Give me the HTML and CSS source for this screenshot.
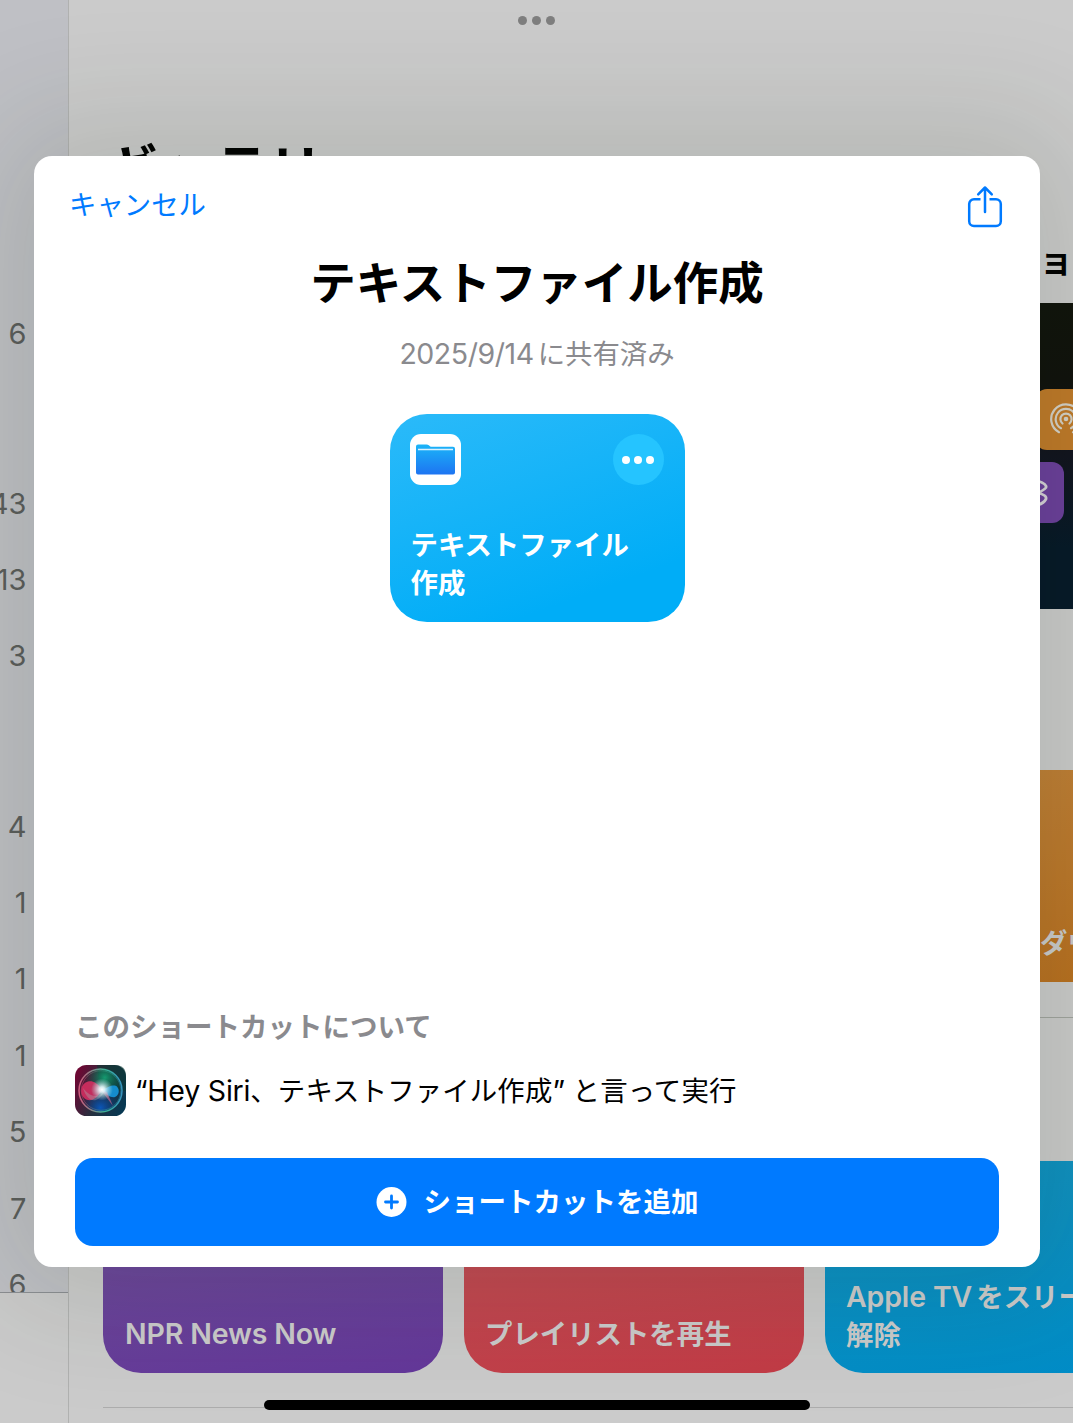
FILE: index.html
```
<!DOCTYPE html>
<html lang="ja">
<head>
    <meta charset="UTF-8">
    <title>テキストファイル作成</title>
    <link rel="stylesheet" href="styles.css">
</head>
<body>
<div class="app">
    <aside class="sidebar">
        <ul class="sidebar-list">
            <li>6</li>
            <li class="group-start">43</li>
            <li>13</li>
            <li>3</li>
            <li class="group-start">4</li>
            <li>1</li>
            <li>1</li>
            <li>1</li>
            <li>5</li>
            <li>7</li>
            <li>6</li>
        </ul>
    </aside>

    <main class="gallery">
        <h1 class="gallery-title">ギャラリー</h1>
        <h2 class="section-title">ョ</h2>
        <div class="banner">
            <div class="tile tile--orange">
                <svg width="34" height="34" viewBox="0 0 34 34" fill="none" stroke="#d6d2c8" stroke-width="2.2" stroke-linecap="round">
                    <circle cx="17" cy="16" r="2.3" fill="#d6d2c8" stroke="none"/>
                    <path d="M13.500 20.500a5.600 5.600 0 1 1 7 0"/>
                    <path d="M12 25.200a10.300 10.300 0 1 1 10 0"/>
                    <path d="M10 29.200a14.800 14.800 0 1 1 14 0"/>
                </svg>
            </div>
            <div class="tile tile--purple">
                <svg width="34" height="34" viewBox="0 0 34 34" fill="none" stroke="#d6d2d8" stroke-width="2.800" stroke-linecap="round" stroke-linejoin="round">
                    <path d="M8 8L21 5Q30 8 29 11.500Q27 14 21 17Q30 19 29 23Q27 27 21 29L8 26"/>
                </svg>
            </div>
        </div>
        <div class="card-row card-row--single">
            <div class="card card--orange">ダウ</div>
        </div>
        <div class="card-row">
            <div class="card card--purple"><span class="latin">NPR News Now</span></div>
            <div class="card card--red">プレイリストを再生</div>
            <div class="card card--blue">
                <div><span class="latin">Apple TV</span><span class="thin-space"> </span>をスリープ</div>
                <div>解除</div>
            </div>
        </div>
    </main>

    <div class="window-dots"><span></span><span></span><span></span></div>

    <section class="sheet">
        <header class="sheet-bar">
            <a class="cancel">キャンセル</a>
            <svg class="share" width="36" height="44" viewBox="0 0 36 44" fill="none" stroke="#007aff" stroke-width="2.5" stroke-linecap="round" stroke-linejoin="round">
                <path d="M13.500 14.2H7a4.8 4.8 0 0 0-4.8 4.8v17.300a4.800 4.800 0 0 0 4.800 4.800h22a4.800 4.800 0 0 0 4.800-4.800V19a4.800 4.800 0 0 0-4.800-4.800h-6.500" stroke-linecap="butt"/>
                <path d="M18 27V2.800M11.200 9.300L18 2.500L24.800 9.300"/>
            </svg>
        </header>

        <h1 class="sheet-title">テキストファイル作成</h1>
        <p class="sheet-date"><span class="latin">2025/9/14</span>に共有済み</p>

        <div class="shortcut">
            <div class="shortcut-top">
                <div class="shortcut-app">
                    <svg width="39" height="31" viewBox="0 0 39 31">
                        <defs>
                            <linearGradient id="folder" x1="0" y1="0" x2="0" y2="1">
                                <stop offset="0" stop-color="#1bb5f8"/>
                                <stop offset="1" stop-color="#1d74f2"/>
                            </linearGradient>
                        </defs>
                        <path d="M2 .5h8.500q1.500 0 2.300.8l1.200 1q.7.500 1.500.500H37q2 0 2 2V28.500q0 2-2 2H2q-2 0-2-2V2.500Q0 .5 2 .5Z" fill="url(#folder)"/>
                        <path d="M2 5.500h35" stroke="#d9f1ff" stroke-width="1.700"/>
                    </svg>
                </div>
                <div class="shortcut-more"><span></span><span></span><span></span></div>
            </div>
            <div class="shortcut-name">テキストファイル<br>作成</div>
        </div>

        <div class="about">
            <h2 class="about-title">このショートカットについて</h2>
            <div class="about-row">
                <svg class="siri" width="51" height="51" viewBox="0 0 51 51">
                    <defs>
                        <linearGradient id="siri-bg" x1="0" y1=".3" x2="1" y2=".7">
                            <stop offset="0" stop-color="#6d0833"/>
                            <stop offset=".5" stop-color="#26303f"/>
                            <stop offset="1" stop-color="#073852"/>
                        </linearGradient>
                        <radialGradient id="siri-green" cx=".6" cy=".2" r=".5">
                            <stop offset="0" stop-color="#159a70"/>
                            <stop offset="1" stop-color="#0a4d3c" stop-opacity="0"/>
                        </radialGradient>
                        <radialGradient id="siri-blue" cx=".5" cy=".9" r=".45">
                            <stop offset="0" stop-color="#0a56b8"/>
                            <stop offset="1" stop-color="#0a3a80" stop-opacity="0"/>
                        </radialGradient>
                        <linearGradient id="siri-ring" x1="0" y1="0" x2="1" y2="0">
                            <stop offset="0" stop-color="#d0587c"/>
                            <stop offset=".6" stop-color="#3bb393"/>
                            <stop offset="1" stop-color="#3594c0"/>
                        </linearGradient>
                        <radialGradient id="siri-glow">
                            <stop offset="0" stop-color="#fff"/>
                            <stop offset=".25" stop-color="#e9fbff" stop-opacity=".9"/>
                            <stop offset="1" stop-color="#a6dfe0" stop-opacity="0"/>
                        </radialGradient>
                    </defs>
                    <rect width="51" height="51" rx="11.500" fill="url(#siri-bg)"/>
                    <path d="M22 0H40Q51 0 51 11V26H25Z" fill="#07392f" opacity=".5"/>
                    <circle cx="25.500" cy="25.500" r="21.500" fill="url(#siri-green)"/>
                    <circle cx="25.500" cy="25.500" r="21.500" fill="url(#siri-blue)"/>
                    <circle cx="25.500" cy="25.500" r="21.500" fill="none" stroke="url(#siri-ring)" stroke-width="1.500"/>
                    <circle cx="26" cy="25.500" r="19.800" fill="none" stroke="url(#siri-ring)" stroke-width=".7" opacity=".6"/>
                    <path d="M27 25C22 17 17 15.500 13 16.500C6 18 4 28 9 33C15 38 22 34 27 25Z" fill="#dc2f63" opacity=".85"/>
                    <path d="M8 23C12 37 22 40 29 27C23 33 16 33 8 23Z" fill="#b0a0a8" opacity=".4"/>
                    <path d="M27 25C33 22 36 20 40 20.500C45 22 45 30 40 32C36 33 31 30 27 25Z" fill="#1596dc" opacity=".9"/>
                    <path d="M26 25L38 41L32 27Z" fill="#db6a92" opacity=".6"/>
                    <circle cx="27" cy="24.500" r="11" fill="url(#siri-glow)"/>
                </svg>
                <p class="about-text"><span class="latin">“Hey Siri</span>、テキストファイル作成<span class="latin">” </span>と言って実行</p>
            </div>
        </div>

        <button class="add">
            <svg width="31" height="31" viewBox="0 0 31 31">
                <circle cx="15.500" cy="15" r="15" fill="#fff"/>
                <path d="M15.500 9v12M9.500 15h12" stroke="#007aff" stroke-width="2.800" stroke-linecap="round"/>
            </svg>
            <span class="add-label">ショートカットを追加</span>
        </button>
    </section>

    <div class="home-indicator"></div>
</div>
</body>
</html>
```
FILE: styles.css
```
* {
    box-sizing: border-box;
}

body {
    margin: 0;
    font-family: "Noto Sans CJK JP", sans-serif;
    font-size: 27.4px;
}

h1, h2, p, ul {
    margin: 0;
    padding: 0;
}

.latin {
    font-family: Inter, sans-serif;
    font-size: 28.5px;
    letter-spacing: -0.15px;
}

.app {
    position: relative;
    display: flex;
    width: 1073px;
    height: 1423px;
    overflow: hidden;
    background: #cbcbcb;
}

/* 背景 */
.sidebar {
    width: 69px;
    border-right: 1px solid #b0b1b0;
    flex-shrink: 0;
}

.sidebar-list {
    height: 1293px;
    padding-top: 295.5px;
    overflow: hidden;
    list-style: none;
    background: #bfc0c5;
    border-bottom: 1px solid #8c8f93;
    font: 29px/76.4px Inter, sans-serif;
    color: #5b5d5c;
}

.sidebar-list li {
    display: flex;
    justify-content: flex-end;
    height: 76.4px;
    padding-right: 41.5px;
}

.sidebar-list .group-start {
    margin-top: 93.8px;
}

.gallery {
    width: 1004px;
    padding: 128px 0 0 34px;
    flex-shrink: 0;
}

.gallery-title {
    height: 107px;
    font-size: 55px;
    line-height: 76px;
}

.section-title {
    height: 68px;
    padding-left: 936px;
    font-size: 34px;
    line-height: 48px;
}

.banner {
    display: flex;
    flex-direction: column;
    gap: 12px;
    height: 306px;
    padding: 86px 0 0 900px;
    background: linear-gradient(#10130b, #10110c 25%, #11131f 50%, #051828 80%);
}

.tile {
    display: flex;
    align-items: center;
    justify-content: center;
    width: 61px;
    height: 61px;
    border-radius: 12px;
    flex-shrink: 0;
}

.tile--orange {
    margin-left: 32px;
    background: #c07a29;
}

.tile--purple {
    background: #6b3f9c;
}

.card-row {
    display: flex;
    gap: 21px;
    height: 247px;
    border-bottom: 1px solid #adadad;
}

.card-row--single {
    justify-content: flex-end;
    height: 248px;
    margin: 161px 0 143px;
    border-color: #a1a49f;
}

.card {
    display: flex;
    flex-wrap: wrap;
    align-content: flex-end;
    width: 340px;
    height: 211.5px;
    padding: 0 0 21px 21px;
    border-radius: 38px;
    color: #cbcbcb;
    font-weight: bold;
    line-height: 38px;
    white-space: nowrap;
    flex-shrink: 0;
}

.card .latin {
    font-weight: 600;
}

.card .thin-space {
    font-size: 18px;
}

.card--orange {
    width: 248px;
    border-radius: 38px 0 0 38px;
    padding: 0 0 22px 215px;
    background: linear-gradient(170deg, #c08139, #b97020);
}

.card--purple {
    padding: 0 0 20px 22px;
    background: linear-gradient(170deg, #70509b, #64379a);
}

.card--red {
    padding-bottom: 22px;
    background: linear-gradient(170deg, #c1525a, #c33b46);
}

.card--blue {
    display: block;
    padding-top: 114px;
    background: linear-gradient(170deg, #1292c0, #008dc8);
}

.card--blue div {
    height: 38px;
}

.window-dots {
    position: absolute;
    top: 16px;
    left: 518px;
    display: flex;
    gap: 5px;
}

.window-dots span {
    width: 9px;
    height: 9px;
    border-radius: 50%;
    background: #7f7f7f;
}

.home-indicator {
    position: absolute;
    left: 264px;
    bottom: 13px;
    width: 546px;
    height: 10px;
    border-radius: 5px;
    background: #000;
}

/* シート */
.sheet {
    position: absolute;
    top: 156px;
    left: 34px;
    display: flex;
    flex-direction: column;
    align-items: center;
    width: 1006px;
    height: 1111px;
    padding: 29px 41px 21px;
    border-radius: 18px;
    background: #fff;
    box-shadow: 0 0 120px 35px rgba(32, 46, 24, .125);
}

.sheet-bar {
    display: flex;
    justify-content: space-between;
    align-self: stretch;
    height: 44px;
    margin: 0 -3.5px 0 -6px;
}

.cancel {
    color: #007aff;
    line-height: 37px;
}

.sheet-title {
    margin-top: 18px;
    font-size: 45.5px;
    line-height: 66px;
}

.sheet-date {
    margin-top: 19px;
    color: #8a8a8e;
    line-height: 40px;
}

.sheet-date .latin {
    margin-right: 4px;
    letter-spacing: -0.45px;
}

.shortcut {
    display: flex;
    flex-direction: column;
    justify-content: space-between;
    width: 295px;
    height: 208px;
    margin-top: 40px;
    padding: 20px 21px 22px 20px;
    border-radius: 37px;
    background: linear-gradient(160deg, #2bbaf9, #00adf7 80%);
    color: #fff;
}

.shortcut-top {
    display: flex;
    justify-content: space-between;
}

.shortcut-app,
.shortcut-more {
    display: flex;
    align-items: center;
    justify-content: center;
    width: 51px;
    height: 51px;
}

.shortcut-app {
    border-radius: 11px;
    background: #fff;
}

.shortcut-more {
    gap: 4px;
    border-radius: 50%;
    background: #25c4ff;
}

.shortcut-more span {
    width: 8px;
    height: 8px;
    border-radius: 50%;
    background: #fff;
}

.shortcut-name {
    padding-left: 1px;
    font-weight: bold;
    line-height: 38px;
}

.about {
    align-self: stretch;
    margin-top: auto;
}

.about-title {
    color: #8a8a8e;
    font-size: 27.5px;
    line-height: 40px;
}

.about-row {
    display: flex;
    align-items: center;
    gap: 9px;
    margin: 19px 0 42px;
}

.about-text {
    line-height: 51px;
    letter-spacing: 0.15px;
    white-space: pre;
}

.about-text .latin {
    letter-spacing: -0.2px;
}

.add {
    display: flex;
    align-items: center;
    justify-content: center;
    gap: 17px;
    width: 924px;
    height: 88px;
    padding: 0;
    border: 0;
    border-radius: 18px;
    background: #007aff;
    color: #fff;
    font: bold 27.5px "Noto Sans CJK JP", sans-serif;
    flex-shrink: 0;
}

.add-label {
    padding-bottom: 4px;
}
```
